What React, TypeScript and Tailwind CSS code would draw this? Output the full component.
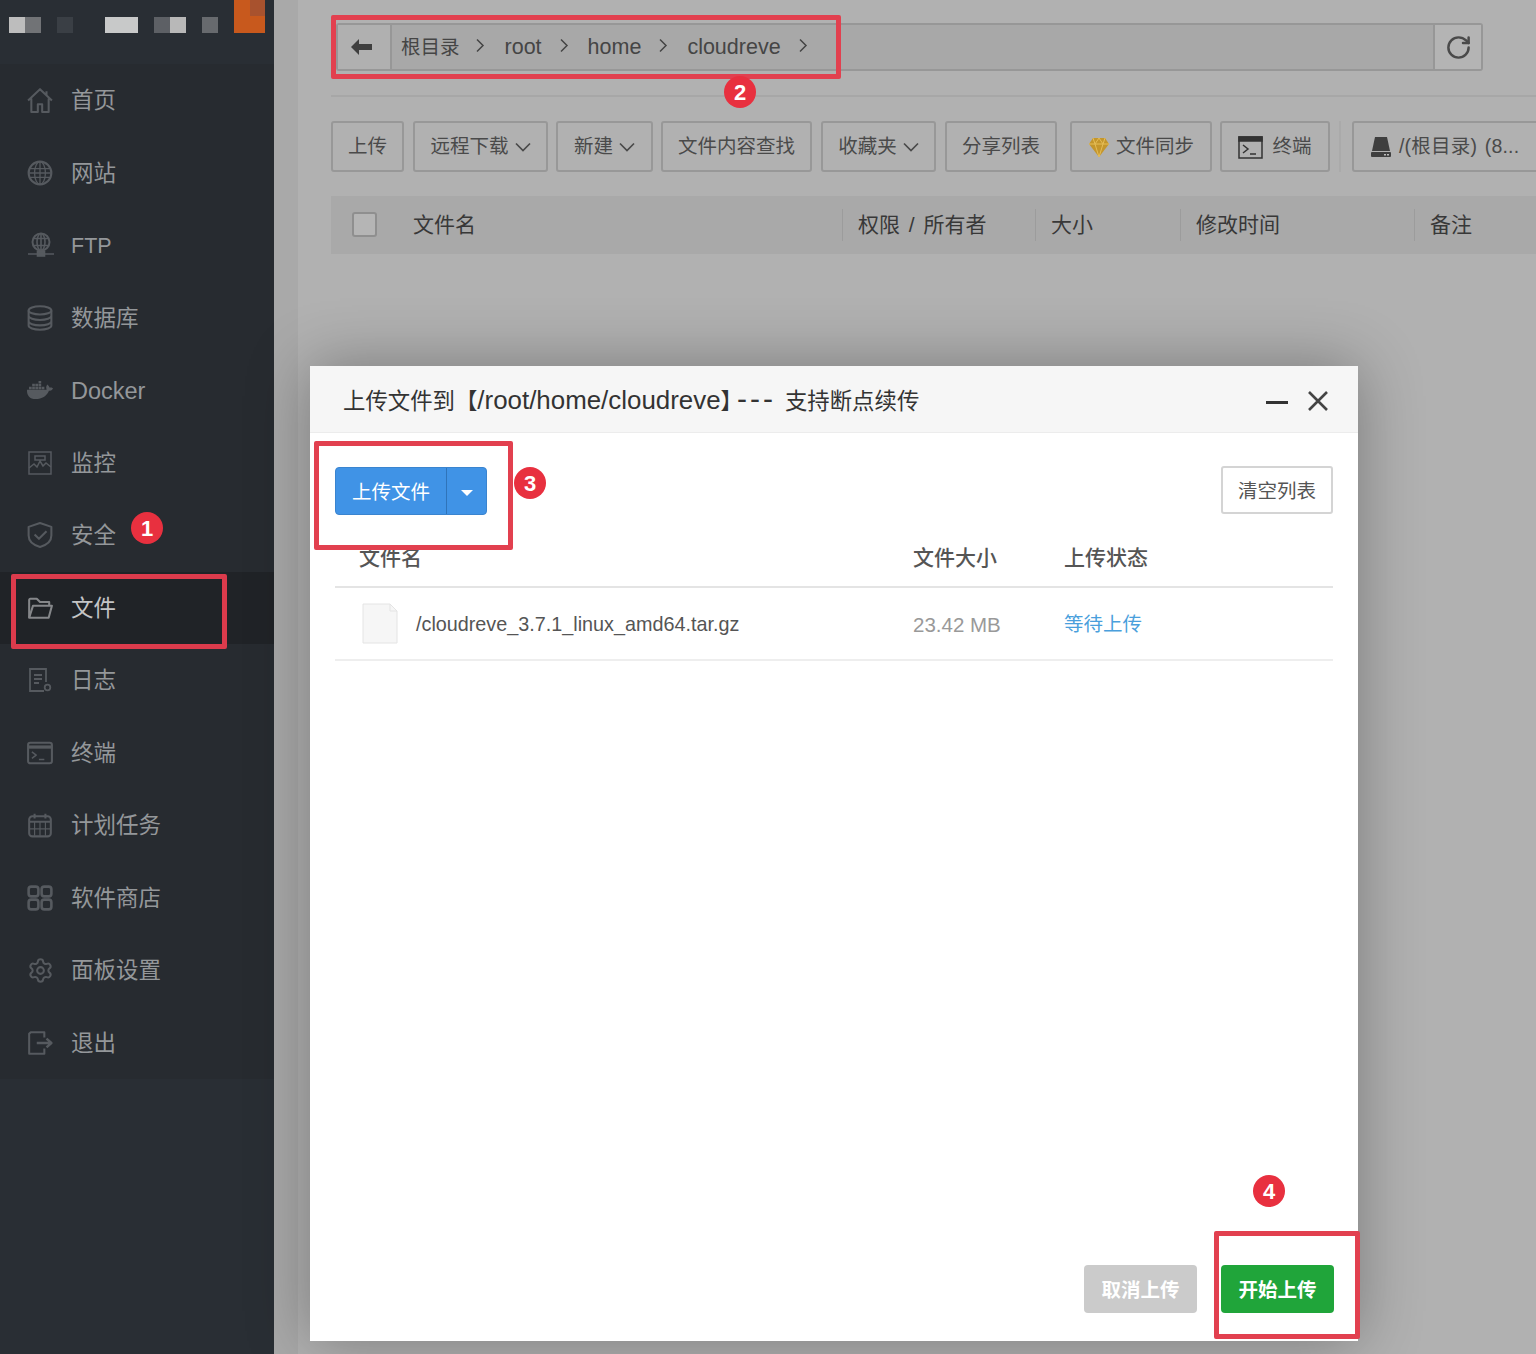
import { RotateCw, Settings } from 'lucide-react'
import { FaDocker } from 'react-icons/fa'
import type { ReactNode } from 'react'

function Icon({ children }: { children: ReactNode }) {
  return (
    <svg width="26" height="26" viewBox="0 0 24 24" fill="none" stroke="currentColor" strokeWidth="1.9" strokeLinejoin="round">
      {children}
    </svg>
  )
}

function FtpIcon() {
  return (
    <svg width="28" height="26" viewBox="0 0 28 26" fill="none" stroke="currentColor" strokeWidth="1.6">
      <circle cx="14" cy="10" r="8.5" strokeWidth="2" />
      <ellipse cx="14" cy="10" rx="4" ry="8.5" />
      <path d="M14 1.5v17M6 6.5h16M6 13.5h16M1 22h26" />
      <rect x="10.5" y="19.5" width="7" height="4.5" fill="currentColor" />
    </svg>
  )
}

function MonitorIcon() {
  return (
    <svg width="26" height="26" viewBox="0 0 26 26" fill="none" stroke="currentColor" strokeWidth="1.5">
      <rect x="2" y="2" width="22" height="22" />
      <path d="M2 18l5-4 3 3 3-6 3 5 3-3 5 4M8 6h10v4H8z" />
    </svg>
  )
}

function LogIcon() {
  return (
    <svg width="26" height="26" viewBox="0 0 26 26" fill="none" stroke="currentColor" strokeWidth="1.8">
      <path d="M17 24H3V2h16v13" />
      <path d="M7 8h8M7 12h8M7 16h5" />
      <circle cx="20.5" cy="20.5" r="2.8" />
    </svg>
  )
}

function GemIcon() {
  return (
    <svg width="22" height="22" viewBox="0 0 22 22">
      <path d="M5 2h12l4 6-10 13L1 8z" fill="#c4962c" />
      <path d="M1 8h20M7 8l4 13 4-13M5 2l2 6 4-6 4 6 2-6" fill="none" stroke="#e5bd57" strokeWidth="1" />
    </svg>
  )
}

function DiskIcon() {
  return (
    <svg width="20" height="22" viewBox="0 0 20 22">
      <path d="M4 1h12l3 14H1z" fill="#3f3f3f" />
      <rect x="0" y="16" width="20" height="5" rx="1" fill="#3f3f3f" />
      <rect x="13" y="18" width="2" height="1.5" fill="#bbb" />
      <rect x="16" y="18" width="2" height="1.5" fill="#bbb" />
    </svg>
  )
}

function Caret() {
  return (
    <svg width="16" height="10" viewBox="0 0 16 10" fill="none" stroke="currentColor" strokeWidth="1.7" className="shrink-0">
      <path d="M1 1.5l7 7 7-7" />
    </svg>
  )
}

function CrumbArrow({ className }: { className: string }) {
  return (
    <svg width="10" height="15" viewBox="0 0 10 15" fill="none" stroke="currentColor" strokeWidth="1.5" className={`shrink-0 ${className}`}>
      <path d="M2 1.5l6 6-6 6" />
    </svg>
  )
}

const menu: { label: string; icon: ReactNode; size?: string; active?: boolean }[] = [
  {
    label: '首页',
    icon: (
      <Icon>
        <path d="M1 12.5L12 2l11 10.5M18 4v3.5M4 10.5V23h6v-7h4v7h6V10.5" />
      </Icon>
    ),
  },
  {
    label: '网站',
    icon: (
      <Icon>
        <circle cx="12" cy="12" r="10.5" />
        <g strokeWidth="1.2">
          <ellipse cx="12" cy="12" rx="5" ry="10.5" />
          <path d="M12 1.5v21M2 8h20M1.5 12h21M2 16h20" />
        </g>
      </Icon>
    ),
  },
  { label: 'FTP', icon: <FtpIcon />, size: 'text-[21.5px]' },
  {
    label: '数据库',
    icon: (
      <Icon>
        <ellipse cx="12" cy="5" rx="10.5" ry="3.8" />
        <path d="M1.5 5v14c0 2.1 4.7 3.8 10.5 3.8s10.5-1.7 10.5-3.8V5M1.5 10c0 2.1 4.7 3.8 10.5 3.8s10.5-1.7 10.5-3.8M1.5 15c0 2.1 4.7 3.8 10.5 3.8s10.5-1.7 10.5-3.8" />
      </Icon>
    ),
  },
  { label: 'Docker', icon: <FaDocker size={26} />, size: 'text-[23.5px]' },
  { label: '监控', icon: <MonitorIcon /> },
  {
    label: '安全',
    icon: (
      <Icon>
        <path d="M12 1l10.5 3.5v8c0 5.8-5 9-10.5 10.5C6.500 21.500 1.500 18.300 1.500 12.500v-8z" />
        <path d="M7 11.500l4 4 7-7" />
      </Icon>
    ),
  },
  {
    label: '文件',
    icon: (
      <Icon>
        <path d="M2 21V4.500a1 1 0 011-1h6l3 3h8.500V10" />
        <path d="M2 21l3.500-11H23l-3 11z" />
      </Icon>
    ),
    active: true,
  },
  { label: '日志', icon: <LogIcon /> },
  {
    label: '终端',
    icon: (
      <Icon>
        <rect x="1" y="2.500" width="22" height="19" rx="2" />
        <path d="M1 6.500h22" strokeWidth="3" />
        <path d="M4.500 11l4 3-4 3M11 18h5" strokeWidth="1.4" />
      </Icon>
    ),
  },
  {
    label: '计划任务',
    icon: (
      <Icon>
        <rect x="2" y="4" width="20" height="18.500" rx="3" />
        <path d="M7 1.500V6M17 1.500V6M2 9h20" />
        <path d="M7 9v13M12 9v13M17 9v13M2 15.500h20" strokeWidth="1.1" />
      </Icon>
    ),
  },
  {
    label: '软件商店',
    icon: (
      <svg width="26" height="26" viewBox="0 0 24 24" fill="none" stroke="currentColor" strokeWidth="2.400">
        <rect x="1.500" y="1.500" width="9" height="9" rx="2.500" />
        <rect x="13.500" y="1.500" width="9" height="9" rx="2.500" />
        <rect x="1.500" y="13.500" width="9" height="9" rx="2.500" />
        <rect x="13.500" y="13.500" width="9" height="9" rx="2.500" />
      </svg>
    ),
  },
  { label: '面板设置', icon: <Settings size={27} strokeWidth={1.8} /> },
  {
    label: '退出',
    icon: (
      <Icon>
        <path d="M16 7V2H3.500L2 3.500V22h14v-5" />
        <path d="M9 12h12M18 8l4.500 4-4.500 4" strokeWidth="2.200" />
      </Icon>
    ),
  },
]

const crumbs = ['root', 'home', 'cloudreve']

const columns = [
  { label: '文件名', width: 'w-[511px]', pad: 'pl-[82px]' },
  { label: '权限 / 所有者', width: 'w-[193px]', pad: 'pl-[15px] border-l border-[#9c9c9c] [word-spacing:3px]' },
  { label: '大小', width: 'w-[145px]', pad: 'pl-[15px] border-l border-[#9c9c9c]' },
  { label: '修改时间', width: 'w-[234px]', pad: 'pl-[15px] border-l border-[#9c9c9c]' },
  { label: '备注', width: 'w-[122px]', pad: 'pl-[15px] border-l border-[#9c9c9c]' },
]

function ToolButton({ className, children }: { className: string; children: ReactNode }) {
  return (
    <div className={`${className} h-[51px] shrink-0 flex items-center gap-[6px] pt-px rounded-[3px] border-2 border-[#989898] text-[19.5px] text-[#4a4a4a] whitespace-nowrap`}>
      {children}
    </div>
  )
}

function Badge({ n, className }: { n: number; className: string }) {
  return (
    <div className={`absolute ${className} w-8 h-8 rounded-full bg-[#e8303f] text-white text-[22px] font-bold flex items-center justify-center`}>
      {n}
    </div>
  )
}

export default function App() {
  return (
    <div className="relative w-[1536px] h-[1354px] overflow-hidden flex bg-[#b1b1b1] font-['Liberation_Sans','Noto_Sans_CJK_SC',sans-serif]">
      {/* SIDEBAR */}
      <aside className="w-[274px] shrink-0 bg-[#292e34] flex flex-col">
        <div className="h-[64px] flex items-start">
          <div className="mt-[17px] ml-[9px] flex h-4">
            <div className="w-4 bg-[#bdbdbd]" />
            <div className="w-4 bg-[#717376]" />
            <div className="w-4 ml-4 bg-[#3a3f45]" />
            <div className="w-[33px] ml-8 bg-[#c8c9c9]" />
            <div className="w-4 ml-4 bg-[#5d6065]" />
            <div className="w-4 bg-[#b8b8b8]" />
            <div className="w-4 ml-4 bg-[#676a6e]" />
          </div>
          <div className="ml-4 w-[31px] h-[33px] bg-[#c8591d] flex justify-end">
            <div className="w-[15px] h-4 bg-[#a8522e]" />
          </div>
        </div>
        <nav className="bg-[#272b30] flex flex-col">
          {menu.map((item) => (
            <div
              key={item.label}
              className={`h-[72.5px] flex items-center ${item.active ? 'bg-[#202327] text-[#c4c5c6]' : 'text-[#94979a]'}`}
            >
              <div className={`w-[71px] pl-[27px] flex ${item.active ? 'text-[#85878a]' : 'text-[#565a5f]'}`}>{item.icon}</div>
              <span className={`${item.size ?? 'text-[22.5px]'} leading-none pt-[2px]`}>{item.label}</span>
            </div>
          ))}
        </nav>
      </aside>

      {/* PAGE BEHIND THE DIALOG */}
      <div className="w-6 shrink-0 bg-[#a9a9a9]" />
      <main className="flex-1 min-w-0 pl-[33px] pt-[23px] overflow-hidden">
        <div className="w-[1147px] ml-[5px] h-[48px] flex rounded-[3px] border-2 border-[#979797] bg-[#a8a8a8]">
          <div className="w-[54px] pr-[5px] bg-[#b0b0b0] border-r-2 border-[#979797] flex items-center justify-center">
            <svg width="21" height="16" viewBox="0 0 21 16" fill="#3f3f3f">
              <path d="M0 8l8-8v5h13v6H8v5z" />
            </svg>
          </div>
          <div className="flex-1 flex items-center pl-[9px] pt-px text-[#454545] whitespace-nowrap">
            <span className="text-[19.5px]">根目录</span>
            <CrumbArrow className="ml-[15px] mr-5 -mt-1" />
            {crumbs.map((c, i) => (
              <div key={c} className="flex items-center">
                <span className="text-[21.5px]">{c}</span>
                <CrumbArrow className={`${i === 2 ? 'ml-[17px]' : 'ml-[17px] mr-[19px]'} -mt-1`} />
              </div>
            ))}
          </div>
          <div className="w-[48px] bg-[#b4b4b4] border-l-2 border-[#979797] flex items-center justify-center text-[#4a4a4a]">
            <RotateCw size={27} strokeWidth={2.2} />
          </div>
        </div>

        <div className="mt-[24px] h-[2px] bg-[#a7a7a7]" />

        <div className="mt-[24px] flex gap-2">
          <ToolButton className="w-[73px] justify-center">上传</ToolButton>
          <ToolButton className="ml-px w-[135px] justify-center">
            远程下载
            <Caret />
          </ToolButton>
          <ToolButton className="w-[97px] justify-center">
            新建
            <Caret />
          </ToolButton>
          <ToolButton className="w-[151px] justify-center">文件内容查找</ToolButton>
          <ToolButton className="ml-px w-[115px] justify-center">
            收藏夹
            <Caret />
          </ToolButton>
          <ToolButton className="ml-px w-[112px] justify-center">分享列表</ToolButton>
          <ToolButton className="ml-[5px] w-[142px] justify-center">
            <GemIcon />
            文件同步
          </ToolButton>
          <ToolButton className="w-[110px] justify-center">
            <svg width="25" height="23" viewBox="0 0 25 23" fill="none" stroke="#333" strokeWidth="1.5">
              <rect x="1" y="1" width="23" height="21" />
              <rect x="1" y="1" width="23" height="4" fill="#333" />
              <path d="M5 9l5 4-5 4M12 18h6" />
            </svg>
            <span className="ml-[3px]">终端</span>
          </ToolButton>
          <div className="ml-px w-[2px] h-[51px] shrink-0 bg-[#aaaaaa]" />
          <ToolButton className="ml-[3px] w-[190px] pl-[17px]">
            <DiskIcon />
            <span className="ml-[2px] tracking-[0.2px] [word-spacing:2px]">/(根目录) (8...</span>
          </ToolButton>
        </div>

        <div className="mt-[24px] h-[58px] flex items-center bg-[#a9a9a9] relative text-[21px] text-[#383838] whitespace-nowrap">
          {columns.map((c) => (
            <div key={c.label} className={`${c.width} ${c.pad} h-[32px] shrink-0 flex items-center`}>
              {c.label}
            </div>
          ))}
          <div className="absolute left-[21px] top-[16px] w-[25px] h-[25px] rounded-[3px] border-2 border-[#8f8f8f] bg-[#b5b5b5]" />
        </div>
      </main>

      {/* UPLOAD DIALOG */}
      <div className="absolute left-[310px] top-[366px] w-[1048px] h-[975px] bg-white shadow-[0_0_60px_rgba(0,0,0,0.32)] flex flex-col">
        <div className="h-[67px] bg-[#f6f6f6] border-b border-[#ececec] flex items-center pl-[33px] pr-[30px] pt-[2px] shrink-0">
          <div className="flex-1 flex items-baseline text-[22.4px] text-[#333] whitespace-nowrap">
            <span>上传文件到【</span>
            <span className="text-[25.9px]">/root/home/cloudreve</span>
            <span className="tracking-[-6px]">】</span>
            <span className="text-[30px] leading-none tracking-[3px]">---</span>
            <span className="ml-[9px]">支持断点续传</span>
          </div>
          <div className="w-[22px] h-[3px] bg-[#333] mr-5 mt-[5px]" />
          <svg width="20" height="20" viewBox="0 0 20 20" stroke="#444" strokeWidth="2.600" className="mt-[2px]">
            <path d="M1 1l18 18M19 1L1 19" />
          </svg>
        </div>

        <div className="flex-1 flex flex-col px-[25px] min-h-0">
          <div className="mt-[34px] flex items-start justify-between">
            <div className="h-[48px] w-[152px] flex rounded-[4px] bg-[#4093e6] border border-[#3a84cf] text-white">
              <div className="w-[111px] flex items-center justify-center pt-[3px] text-[19.5px] border-r border-[#2f74ba]">上传文件</div>
              <div className="flex-1 flex items-center justify-center">
                <div className="w-0 h-0 border-x-[6px] border-x-transparent border-t-[6px] border-t-white mt-[3px]" />
              </div>
            </div>
            <div className="-mt-px w-[112px] h-[48px] rounded-[3px] border-2 border-[#d4d4d4] flex items-center justify-center pt-[3px] text-[19.5px] text-[#555]">
              清空列表
            </div>
          </div>

          <div className="mt-[19px] h-[54px] pb-1 flex items-center border-b-2 border-[#e4e4e4] text-[21px] font-medium text-[#555] whitespace-nowrap">
            <div className="w-[578px] pl-6">文件名</div>
            <div className="w-[151px]">文件大小</div>
            <div>上传状态</div>
          </div>

          <div className="h-[73px] flex items-center border-b-2 border-[#eeeeee] text-[19.8px] whitespace-nowrap">
            <div className="w-[578px] pl-[27px] flex items-center text-[#555]">
              <svg width="36" height="41" viewBox="0 0 36 41" className="shrink-0">
                <path d="M1 1h27l7 7v32H1z" fill="#f6f6f6" stroke="#e4e4e4" />
                <path d="M28 1v7h7" fill="none" stroke="#e4e4e4" />
              </svg>
              <span className="ml-[18px] pt-[3px]">/cloudreve_3.7.1_linux_amd64.tar.gz</span>
            </div>
            <div className="w-[151px] pt-[3px] text-[20.5px] text-[#999]">23.42 MB</div>
            <div className="pt-[3px] text-[19.5px] text-[#4a9fdc]">等待上传</div>
          </div>

          <div className="mt-auto mb-[28px] -mr-px flex justify-end gap-6">
            <div className="w-[113px] h-[48px] rounded-[4px] bg-[#cbcbcb] flex items-center justify-center pt-[3px] text-[19.5px] font-bold text-white">
              取消上传
            </div>
            <div className="w-[113px] h-[48px] rounded-[4px] bg-[#20a53a] flex items-center justify-center pt-[3px] text-[19.5px] font-bold text-white">
              开始上传
            </div>
          </div>
        </div>
      </div>

      {/* RED MARKUP */}
      <div className="absolute left-[11px] top-[574px] w-[216px] h-[75px] rounded-[2px] border-[5px] border-[#dc3b4c]" />
      <div className="absolute left-[331px] top-[15px] w-[510px] h-[64px] rounded-[2px] border-[5px] border-[#e2404f]" />
      <div className="absolute left-[314px] top-[441px] w-[199px] h-[109px] rounded-[2px] border-[5px] border-[#e2404f]" />
      <div className="absolute left-[1214px] top-[1231px] w-[146px] h-[108px] rounded-[2px] border-[5px] border-[#e2404f]" />
      <Badge n={1} className="left-[131px] top-[512px]" />
      <Badge n={2} className="left-[724px] top-[76px]" />
      <Badge n={3} className="left-[514px] top-[467px]" />
      <Badge n={4} className="left-[1253px] top-[1175px]" />
    </div>
  )
}
